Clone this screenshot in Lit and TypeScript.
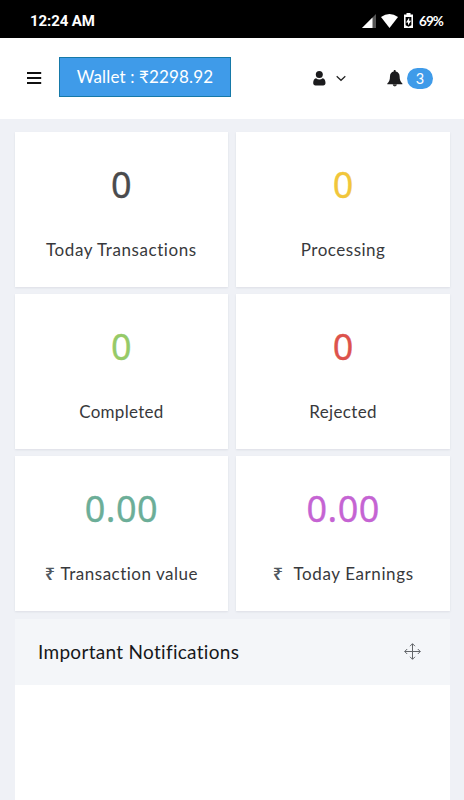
import { LitElement, html, css, svg } from "lit";
import { customElement, property } from "lit/decorators.js";
import { styleMap } from "lit/directives/style-map.js";

interface Stat {
  value: string;
  label: string;
  color: string;
  rupee?: boolean;
  gap?: number;
  spacing: number;
}

const STATS: Stat[] = [
  { value: "0", label: "Today Transactions", color: "#4a4b4d", spacing: 0.57 },
  { value: "0", label: "Processing", color: "#f1c63b", spacing: 0.5 },
  { value: "0", label: "Completed", color: "#96ca67", spacing: 0.27 },
  { value: "0", label: "Rejected", color: "#dd534c", spacing: 0.35 },
  { value: "0.00", label: "Transaction value", color: "#6cae98", rupee: true, gap: 5, spacing: 0.5 },
  { value: "0.00", label: "Today Earnings", color: "#c564d3", rupee: true, gap: 10, spacing: 0.6 },
];

@customElement("stat-card")
export class StatCard extends LitElement {
  @property({ attribute: false }) stat!: Stat;

  static styles = css`
    :host {
      display: flex;
      flex-direction: column;
      align-items: center;
      height: 155px;
      background: #fff;
      box-shadow: 0 1px 2px rgba(60, 70, 90, 0.1);
    }
    .value {
      margin-top: 31px;
      height: 44px;
      font-family: "Noto Sans", sans-serif;
      font-size: 36px;
      line-height: 44px;
      letter-spacing: 0.4px;
      -webkit-text-stroke: 0.3px currentColor;
    }
    .label {
      display: flex;
      margin-top: 31px;
      font-size: 17px;
      line-height: 24px;
      color: #38393c;
      white-space: nowrap;
    }
    .rupee {
      font: 600 18px/23px "Noto Sans", sans-serif;
      color: #505860;
    }
  `;

  render() {
    const s = this.stat;
    return html`
      <div class="value" style=${styleMap({ color: s.color })}>${s.value}</div>
      <div class="label" style=${styleMap({ gap: `${s.gap ?? 0}px`, letterSpacing: `${s.spacing}px` })}>
        ${s.rupee ? html`<span class="rupee">₹</span>` : null}<span>${s.label}</span>
      </div>
    `;
  }
}

const signal = svg`<path d="M0 14 14 0V14Z" fill="#555"/><path d="M0 14 10.5 3.5V14Z" fill="#fff"/>`;

@customElement("app-root")
export class AppRoot extends LitElement {
  static styles = css`
    :host {
      display: flex;
      flex-direction: column;
      height: 800px;
      overflow: hidden;
      background: #eff1f6;
      font-family: Lato, "Noto Sans", sans-serif;
    }
    svg {
      display: block;
      flex: none;
    }
    .status {
      display: flex;
      align-items: center;
      flex: none;
      height: 38px;
      box-sizing: border-box;
      padding: 3px 21px 0 30px;
      background: #000;
      color: #fff;
      font-family: Roboto, sans-serif;
    }
    .time {
      flex: 1;
      font-size: 15px;
      font-weight: 700;
      letter-spacing: -0.1px;
    }
    .signal { margin-right: 5px; }
    .wifi { margin-right: 6px; }
    .battery { margin-right: 6px; }
    .percent {
      font: 700 13.5px/16px Lato, sans-serif;
      width: 24px;
      white-space: nowrap;
      letter-spacing: -0.9px;
    }
    .bar {
      display: flex;
      align-items: center;
      flex: none;
      height: 81px;
      box-sizing: border-box;
      padding: 0 31px 3px 27px;
      background: #fff;
    }
    .menu { margin: 1px 17px 0 0; }
    .wallet {
      box-sizing: border-box;
      width: 172px;
      height: 40px;
      border: 1px solid #1679a8;
      background: #3f9be9;
      color: #fff;
      text-align: center;
      font-size: 17px;
      line-height: 38px;
      letter-spacing: 0.15px;
      white-space: nowrap;
    }
    .user { margin: 2px 0 0 82px; }
    .chevron { margin: 2px 0 0 10px; }
    .bell { margin: 2px 4px 0 auto; }
    .count {
      width: 26px;
      height: 21px;
      margin-top: 2px;
      border-radius: 11px;
      background: #3f9be9;
      color: #fff;
      text-align: center;
      font-size: 14.5px;
      line-height: 21px;
    }
    .content {
      display: flex;
      flex-direction: column;
      flex: 1;
      padding: 13px 14px 0 14.5px;
    }
    .grid {
      display: grid;
      grid-template-columns: 1fr 1fr;
      gap: 7px 8px;
    }
    .panel {
      flex: 1;
      margin-top: 8px;
      background: #fff;
    }
    .heading {
      display: flex;
      align-items: center;
      justify-content: space-between;
      height: 66px;
      box-sizing: border-box;
      padding: 0 29px 1px 23.5px;
      background: #f4f6f9;
      color: #17181a;
      font-size: 19px;
      letter-spacing: 0.3px;
    }
  `;

  render() {
    return html`
      <div class="status">
        <span class="time">12:24 AM</span>
        <svg class="signal" width="14" height="14" viewBox="0 0 14 14">${signal}</svg>
        <svg class="wifi" width="17" height="14" viewBox="0 0 17 14"><path d="M0 3Q8.5-3 17 3L8.5 14Z" fill="#fff"/></svg>
        <svg class="battery" width="9" height="15" viewBox="0 0 9 15">
          <path d="M2.5 1.5V0h4v1.5H9V15H0V1.5Z" fill="#fff"/>
          <path d="M1.6 4h5.8v8.2l-2.9 1.5-2.9-1.5Z" fill="#000"/>
          <path d="M5.2 4.5 2 9.4h2v3L7.1 7.7h-1.9Z" fill="#fff"/>
        </svg>
        <span class="percent">69%</span>
      </div>
      <div class="bar">
        <svg class="menu" width="15" height="12" viewBox="0 0 15 12"><path d="M0 1h14.2M0 6h14.2M0 11h14.2" stroke="#111" stroke-width="2"/></svg>
        <div class="wallet">Wallet : ₹2298.92</div>
        <svg class="user" width="13" height="15" viewBox="0 0 13 15" fill="#1b1b1d">
          <path d="M3 7.300C1.200 7.800.2 9.300.2 12c0 1.600.9 2.500 2.300 2.500h7.700c1.400 0 2.300-.9 2.300-2.500 0-2.700-1-4.200-2.800-4.700-1 .8-2.100 1.200-3.300 1.200S4 8.100 3 7.300Z"/>
          <circle cx="6.300" cy="3.600" r="3.500"/>
        </svg>
        <svg class="chevron" width="10" height="7" viewBox="0 0 10 7"><path d="m.7 1.200 4.300 4.100 4.300-4.100" fill="none" stroke="#222" stroke-width="1.200"/></svg>
        <svg class="bell" width="16" height="17" viewBox="0 0 16 17">
          <path d="M7.700 0c.6 0 1 .4 1 1v.6c2.500.5 3.900 2.300 3.900 4.700 0 4 1.100 5.800 2.800 7.200v.8H.3v-.8C2 12.100 3 10.300 3 6.300c0-2.400 1.300-4.200 3.700-4.700V1c0-.6.4-1 1-1Z" fill="#1b1b1d"/>
          <path d="M5.700 14.300h4.200a2.100 2.100 0 0 1-4.200 0Z" fill="#333"/>
        </svg>
        <span class="count">3</span>
      </div>
      <div class="content">
        <div class="grid">${STATS.map((s) => html`<stat-card .stat=${s}></stat-card>`)}</div>
        <div class="panel">
          <div class="heading">
            <span>Important Notifications</span>
            <svg width="17" height="17" viewBox="0 0 17 17" fill="none" stroke="#626569" stroke-width="1">
              <path d="M8.500.8v15.400M.8 8.500h15.400M6 3.200 8.500.7 11 3.200M6 13.800l2.500 2.500 2.500-2.500M3.200 6 .7 8.500 3.200 11M13.800 6l2.500 2.500-2.500 2.500"/>
            </svg>
          </div>
        </div>
      </div>
    `;
  }
}
